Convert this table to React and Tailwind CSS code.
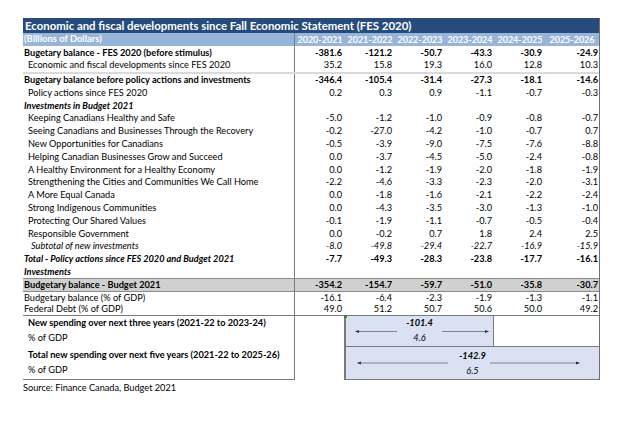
import React from "react";

const years = ["2020-2021", "2021-2022", "2022-2023", "2023-2024", "2024-2025", "2025-2026"];

const rows = [
  { label: "Bugetary balance - FES 2020 (before stimulus)", kind: "bold", h: "h-[13px]", vals: ["-381.6", "-121.2", "-50.7", "-43.3", "-30.9", "-24.9"] },
  { label: "Economic and fiscal developments since FES 2020", kind: "indent", h: "h-[12.5px]", sep: true, vals: ["35.2", "15.8", "19.3", "16.0", "12.8", "10.3"] },
  { label: "Bugetary balance before policy actions and investments", kind: "bold", vals: ["-346.4", "-105.4", "-31.4", "-27.3", "-18.1", "-14.6"] },
  { label: "Policy actions since FES 2020", kind: "indent", vals: ["0.2", "0.3", "0.9", "-1.1", "-0.7", "-0.3"] },
  { label: "Investments in Budget 2021", kind: "section", vals: [] },
  { label: "Keeping Canadians Healthy and Safe", kind: "indent", vals: ["-5.0", "-1.2", "-1.0", "-0.9", "-0.8", "-0.7"] },
  { label: "Seeing Canadians and Businesses Through the Recovery", kind: "indent", vals: ["-0.2", "-27.0", "-4.2", "-1.0", "-0.7", "0.7"] },
  { label: "New Opportunities for Canadians", kind: "indent", vals: ["-0.5", "-3.9", "-9.0", "-7.5", "-7.6", "-8.8"] },
  { label: "Helping Canadian Businesses Grow and Succeed", kind: "indent", vals: ["0.0", "-3.7", "-4.5", "-5.0", "-2.4", "-0.8"] },
  { label: "A Healthy Environment for a Healthy Economy", kind: "indent", vals: ["0.0", "-1.2", "-1.9", "-2.0", "-1.8", "-1.9"] },
  { label: "Strengthening the Cities and Communities We Call Home", kind: "indent", vals: ["-2.2", "-4.6", "-3.3", "-2.3", "-2.0", "-3.1"] },
  { label: "A More Equal Canada", kind: "indent", vals: ["0.0", "-1.8", "-1.6", "-2.1", "-2.2", "-2.4"] },
  { label: "Strong Indigenous Communities", kind: "indent", vals: ["0.0", "-4.3", "-3.5", "-3.0", "-1.3", "-1.0"] },
  { label: "Protecting Our Shared Values", kind: "indent", vals: ["-0.1", "-1.9", "-1.1", "-0.7", "-0.5", "-0.4"] },
  { label: "Responsible Government", kind: "indent", vals: ["0.0", "-0.2", "0.7", "1.8", "2.4", "2.5"] },
  { label: "Subtotal of new investments", kind: "subtotal", vals: ["-8.0", "-49.8", "-29.4", "-22.7", "-16.9", "-15.9"] },
  { label: "Total - Policy actions since FES 2020 and Budget 2021", kind: "total", vals: ["-7.7", "-49.3", "-28.3", "-23.8", "-17.7", "-16.1"] },
  { label: "Investments", kind: "section", vals: [] },
  { label: "Budgetary balance - Budget 2021", kind: "highlight", h: "h-[12px]", vals: ["-354.2", "-154.7", "-59.7", "-51.0", "-35.8", "-30.7"] },
  { label: "Budgetary balance (% of GDP)", kind: "plain", h: "h-[11.3px]", vals: ["-16.1", "-6.4", "-2.3", "-1.9", "-1.3", "-1.1"] },
  { label: "Federal Debt (% of GDP)", kind: "plain", h: "h-[11.3px]", vals: ["49.0", "51.2", "50.7", "50.6", "50.0", "49.2"] },
];

const labelClass = {
  bold: "pl-[1px] font-bold",
  indent: "pl-[5px]",
  section: "pl-[1px] font-bold italic",
  subtotal: "pl-[8px] italic",
  total: "pl-[1px] font-bold italic",
  highlight: "pl-[1px] font-bold",
  plain: "pl-[1px]",
};

const valClass = {
  bold: "font-bold",
  subtotal: "italic",
  total: "font-bold",
  highlight: "font-bold",
};

function Row({ row }) {
  const h = row.h || "h-[12.8px]";
  const bg = row.kind === "highlight" ? "bg-[#d0d0d0] border-y border-[#8a8a8a]" : "";
  const sep = row.sep ? "border-b-2 border-[#dadada]" : "";
  return (
    <div className={`flex ${h} ${bg} ${sep} box-content`}>
      <div className={`flex w-[272px] items-center border-r border-[#7a7a7a] whitespace-nowrap ${labelClass[row.kind]}`}>
        {row.label}
      </div>
      {[0, 1, 2, 3, 4, 5].map((i) => (
        <div
          key={i}
          className={`flex items-center justify-end ${i === 5 ? "flex-1 pr-[1px]" : "w-[50px] pr-[3px]"} ${valClass[row.kind] || ""}`}
        >
          {row.vals[i]}
        </div>
      ))}
    </div>
  );
}

function Arrow({ x1, x2, y, head }) {
  return (
    <svg className="absolute left-0 top-0 h-full w-full" fill="none">
      <line x1={x1} y1={y} x2={x2} y2={y} stroke="#6b6b6b" strokeWidth="0.8" />
      {head === "left" ? (
        <path d={`M${x1 - 1} ${y} L${x1 + 3} ${y - 1.5} L${x1 + 3} ${y + 1.5} Z`} fill="#333" />
      ) : (
        <path d={`M${x2 + 1} ${y} L${x2 - 3} ${y - 1.5} L${x2 - 3} ${y + 1.5} Z`} fill="#333" />
      )}
    </svg>
  );
}

export default function App() {
  return (
    <div className="min-h-[429px] w-[628px] bg-white pl-[23px] pt-[18px] text-[9.2px] text-black" style={{ fontFamily: "Lato, 'Liberation Sans', sans-serif" }}>
      <div className="w-[577px] border-r border-[#6f6f6f]">
        <div className="flex h-[15px] items-center bg-[#264b7c] pl-[2px] text-[11.4px] font-bold text-white">
          Economic and fiscal developments since Fall Economic Statement (FES 2020)
        </div>
        <div className="flex h-[13px] bg-[#97b4d9] text-[9px] font-bold text-white">
          <div className="flex w-[272px] items-center border-r border-[#6f7f95] pl-[1px] text-[9.4px]">(Billions of Dollars)</div>
          {years.map((y, i) => (
            <div key={y} className={`flex items-center justify-center ${i === 5 ? "flex-1" : "w-[50px]"}`}>
              {y}
            </div>
          ))}
        </div>

        {rows.map((row) => (
          <Row key={row.label} row={row} />
        ))}

        <div className="border-t border-[#7a7a7a]">
          <div className="flex h-[30px]">
            <div className="flex w-[272px] flex-col border-r border-[#7a7a7a] pl-[5px]">
              <div className="flex h-[15px] items-center font-bold">New spending over next three years (2021-22 to 2023-24)</div>
              <div className="flex h-[15px] items-center">% of GDP</div>
            </div>
            <div className="w-[49px]" />
            <div className="relative flex w-[150px] flex-col items-center border-x border-l-2 border-[#7a7a7a] bg-[#d9e1f2] italic">
              <div className="flex h-[15px] items-center font-bold">-101.4</div>
              <div className="flex h-[15px] items-center">4.6</div>
              <Arrow x1={10} x2={51} y={15.5} head="left" />
              <Arrow x1={96} x2={142} y={15.5} head="right" />
              <div className="absolute -left-[2px] -top-[1px] h-[3px] w-[3px] bg-[#2e8b3a]" />
            </div>
            <div className="flex-1" />
          </div>
          <div className="flex h-[34px]">
            <div className="flex w-[272px] flex-col border-r border-[#7a7a7a] pl-[5px]">
              <div className="flex h-[16px] items-end font-bold">Total new spending over next five years (2021-22 to 2025-26)</div>
              <div className="flex h-[16px] items-center">% of GDP</div>
            </div>
            <div className="w-[49px]" />
            <div className="relative flex flex-1 flex-col items-center border-y border-l-2 border-[#7a7a7a] bg-[#d9e1f2] italic">
              <div className="flex h-[16px] items-end font-bold">-142.9</div>
              <div className="flex h-[16px] items-center">6.5</div>
              <Arrow x1={12} x2={102} y={16} head="left" />
              <Arrow x1={144} x2={233} y={16} head="right" />
            </div>
          </div>
          <div className="h-0 border-t border-[#7a7a7a] -mt-[1px] w-[272px]" />
        </div>
      </div>
      <div className="pt-[1px]">Source: Finance Canada, Budget 2021</div>
    </div>
  );
}
